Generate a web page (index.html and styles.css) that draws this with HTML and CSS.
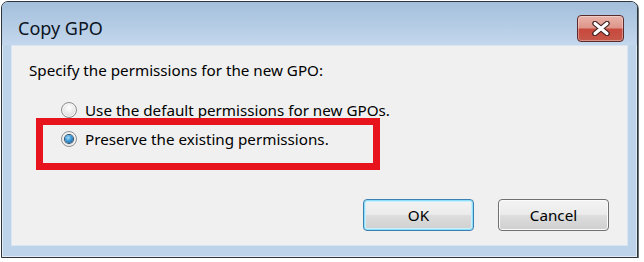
FILE: index.html
```html
<!DOCTYPE html>
<html lang="en">
<head>
    <meta charset="UTF-8">
    <title>Copy GPO</title>
    <link rel="stylesheet" href="styles.css">
</head>
<body>
    <div class="window">
        <div class="titlebar">
            <span class="title">Copy GPO</span>
            <button class="close-button" aria-label="Close">
                <svg width="22" height="15" viewBox="0 0 22 15">
                    <path d="M5 2.5 L17 12.5 M17 2.5 L5 12.5" stroke="#3d2020" stroke-width="5.5" stroke-linecap="round"/>
                    <path d="M5 2.5 L17 12.5 M17 2.5 L5 12.5" stroke="#ffffff" stroke-width="3.2" stroke-linecap="round"/>
                </svg>
            </button>
        </div>
        <div class="frame">
            <div class="client">
                <p class="prompt">Specify the permissions for the new GPO:</p>
                <div class="options">
                    <label class="option"><span class="radio"></span>Use the default permissions for new GPOs.</label>
                    <label class="option"><span class="radio checked"></span>Preserve the existing permissions.</label>
                    <!-- annotation drawn over the dialog -->
                    <div class="highlight"></div>
                </div>
                <div class="actions">
                    <button class="btn btn-default">OK</button>
                    <button class="btn">Cancel</button>
                </div>
            </div>
        </div>
    </div>
</body>
</html>
```

FILE: styles.css
```css
body {
    margin: 0;
    background-color: #ffffff;
    font-family: "Noto Sans", "Open Sans", sans-serif;
    color: #000000;
}
.window {
    box-sizing: border-box;
    width: 637px;
    height: 257px;
    margin: 1px 0 0 1px;
    border: 1px solid #2e3438;
    border-radius: 7px 7px 0 0;
    background-color: #bcd3ea;
    box-shadow: 1px 1px 0 #6a7377, inset 0 0 0 1px rgba(255,255,255,0.55);
    display: flex;
    flex-direction: column;
}
.titlebar {
    height: 43px;
    flex-shrink: 0;
    display: flex;
    align-items: flex-start;
    justify-content: space-between;
    padding: 13px 13px 0 16px;
    box-sizing: border-box;
    border-radius: 6px 6px 0 0;
    background: linear-gradient(to bottom, #a4bfdc, #c3d7ed);
}
.title {
    font-size: 18px;
    line-height: 27px;
    color: #0c1422;
}
.close-button {
    width: 47px;
    height: 27px;
    padding: 0;
    border: 1px solid #5c2a2a;
    border-radius: 4px;
    background: linear-gradient(to bottom, #e9b3aa 0%, #de9489 48%, #c8483c 52%, #c5584a 100%);
    box-shadow: inset 0 0 0 1px rgba(255,255,255,0.35);
    display: flex;
    align-items: center;
    justify-content: center;
}
.frame {
    flex: 1;
    padding: 0 9px 11px 9px;
    display: flex;
}
.client {
    flex: 1;
    background-color: #f0f0f0;
    border: 1px solid #d9e5f2;
    display: flex;
    flex-direction: column;
    font-size: 15.2px;
}
.prompt {
    margin: 14px 0 0 17px;
    line-height: 20px;
}
.options {
    position: relative;
    margin: 20px 0 0 49px;
    display: flex;
    flex-direction: column;
    gap: 9px;
}
.option {
    display: flex;
    align-items: center;
    gap: 8px;
    line-height: 20px;
}
.radio {
    box-sizing: border-box;
    width: 16px;
    height: 16px;
    border-radius: 50%;
    border: 1px solid #8c8e90;
    background: radial-gradient(circle at 50% 35%, #ffffff 0%, #e6e6e6 55%, #cfd0d1 100%);
    box-shadow: inset 0 0 0 1px #f6f6f6;
    display: flex;
    align-items: center;
    justify-content: center;
}
.radio.checked::after {
    content: "";
    width: 8px;
    height: 8px;
    border-radius: 50%;
    background: radial-gradient(circle at 40% 35%, #a8dcfa 0%, #3a97d6 45%, #154f7f 100%);
    box-shadow: 0 0 0 1px #2b4a66;
}
.highlight {
    position: absolute;
    left: -25px;
    top: 18px;
    width: 344px;
    height: 52px;
    box-sizing: border-box;
    border: 7px solid #e8141d;
}
.actions {
    margin-top: auto;
    padding: 0 18px 14px 0;
    display: flex;
    justify-content: flex-end;
    gap: 24px;
}
.btn {
    width: 111px;
    height: 32px;
    font-family: inherit;
    font-size: 15.2px;
    color: #000000;
    border: 1px solid #707070;
    border-radius: 4px;
    background: linear-gradient(to bottom, #f3f3f3 0%, #ebebeb 48%, #dddddd 52%, #cfcfcf 100%);
    box-shadow: inset 0 0 0 1px #fbfbfb;
}
.btn-default {
    border-color: #3c7fb1;
    box-shadow: inset 0 0 0 1px #8ee0fa, inset 0 0 0 2px #c9eefc;
}
```
